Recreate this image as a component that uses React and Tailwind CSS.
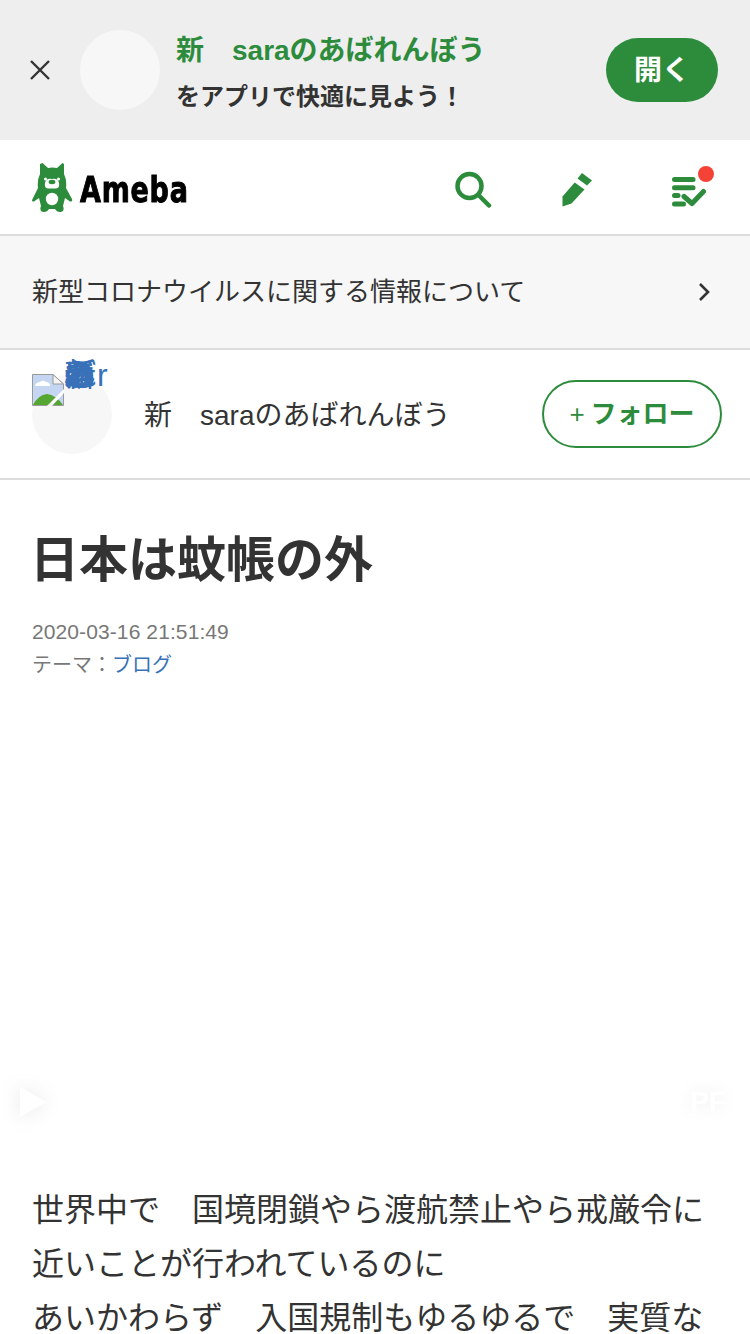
import React from 'react';

const GREEN = '#2d8c3c';
const stackedName = ['新', 'の', 'あ', 'ば', 'れ', 'ん', 'ぼ', 'う', 's', 'a'];

const AmebaMark = () => (
    <svg width="41" height="51" viewBox="0 0 41 51" fill={GREEN} className="shrink-0">
        <path d="M10.5 1 L16 6 Q20 5 25 6 L30.5 1 L32 2 L32 12 Q35 18 34 26 L40 37 Q41 40 38 39.5 L33 36 L31 44 Q33 49 29 50 Q25 50.5 23 47 L17 47 Q15 50.5 11 50 Q7 49 9 44 L7 36 L2 39.5 Q-1 40 0.5 37 L6 26 Q5 18 8 12 L8 2 Z" />
        <circle cx="20" cy="37" r="6.2" fill="#fff" />
        <path d="M13 21 Q14 16 20 17 Q26 16 27 21 Q28 26 24 26.5 L16 26.5 Q12 26 13 21 Z" fill="#fff" />
        <circle cx="13.5" cy="17" r="1.5" fill="#fff" />
        <circle cx="26.5" cy="17" r="1.5" fill="#fff" />
        <ellipse cx="20" cy="20" rx="3.4" ry="2.2" />
    </svg>
);

const SearchIcon = () => (
    <svg width="38" height="38" viewBox="0 0 38 38" fill="none" stroke={GREEN} strokeWidth="4.5" strokeLinecap="round">
        <circle cx="15.5" cy="15" r="12" />
        <path d="M24.5 24 L35 34.5" />
    </svg>
);

const PencilIcon = () => (
    <svg width="32" height="34" viewBox="0 0 32 34" fill={GREEN}>
        <path d="M20 0 L30 7.5 L25 12.5 L15.5 5.5 Z" />
        <path d="M12.7 9.5 L22.5 16.5 L9.5 30.5 L0.5 33.5 L0.5 23.5 Z" />
    </svg>
);

const TasksIcon = () => (
    <svg width="34" height="30" viewBox="0 0 34 30" fill="none" stroke={GREEN} strokeWidth="5" strokeLinecap="round" strokeLinejoin="round">
        <path d="M2.5 2.5 H21" />
        <path d="M2.5 10.8 H21" />
        <path d="M2.5 18.5 H6" />
        <path d="M2.5 27 H11.5" />
        <path d="M12 19.5 L20 26.5 L31.5 14.5" />
    </svg>
);

// stock placeholder the browser paints for an image that failed to load
const BrokenImage = () => (
    <svg width="32" height="32" viewBox="0 0 32 32" className="absolute left-0 top-0">
        <path d="M0.5 0.5 H21 L31.5 10 V31.5 H0.5 Z" fill="#c5d6f3" stroke="#9a9a9a" />
        <path d="M21 0.5 V10 H31.5 Z" fill="#f4f4f4" stroke="#9a9a9a" />
        <path d="M3 12 Q4 8 8 8 Q11 5 14 8 Q18 8 18 12 Z" fill="#fff" />
        <path d="M1 31 Q6 21 15 20 Q24 21 31 31 Z" fill="#55a632" />
        <path d="M14 33 L33 14 L33 18 L19 33 Z" fill="#fff" />
    </svg>
);

export default function App() {
    return (
        <div className="relative h-[1334px] overflow-hidden bg-white text-[#333] font-['Liberation_Sans','Noto_Sans_CJK_JP',sans-serif]">
            {/* app banner */}
            <div className="flex h-[140px] items-center bg-[#eeeeee]">
                <svg width="20" height="20" viewBox="0 0 20 20" className="ml-[30px] shrink-0" stroke="#333" strokeWidth="2.4">
                    <path d="M1 1 L19 19 M19 1 L1 19" />
                </svg>
                <div className="ml-[30px] size-20 shrink-0 rounded-full bg-[#f7f7f7]" />
                <div className="ml-4 flex-1 pt-1.5">
                    <div className="text-[28px] leading-[40px] font-bold text-[#2d8c3c]">新　saraのあばれんぼう</div>
                    <div className="mt-[7px] text-[24px] leading-[38px] font-bold">をアプリで快適に見よう！</div>
                </div>
                <button className="mr-8 h-16 w-28 rounded-full bg-[#2d8c3c] pt-0.5 text-[28px] font-bold text-white">開く</button>
            </div>

            {/* global header */}
            <header className="flex h-[96px] items-center border-b-2 border-[#dddddd] pl-8">
                <AmebaMark />
                <span className="ml-[7px] mt-1.5 origin-left scale-x-[0.75] text-[36px] leading-none font-bold tracking-[1px] text-black font-['DejaVu_Sans',sans-serif] [-webkit-text-stroke:1px_black]">Ameba</span>
                <div className="ml-auto flex items-center pt-1.5">
                    <SearchIcon />
                    <div className="ml-[70px]"><PencilIcon /></div>
                    <div className="relative mr-[44px] ml-[78px] mt-1">
                        <TasksIcon />
                        <span className="absolute -top-[11px] right-[-8px] size-4 rounded-full bg-[#f44336]" />
                    </div>
                </div>
            </header>

            {/* notice link */}
            <div className="flex h-[114px] items-center justify-between border-b-2 border-[#dddddd] bg-[#f7f7f7] pr-10 pl-8">
                <span className="text-[26px]">新型コロナウイルスに関する情報について</span>
                <svg width="12" height="20" viewBox="0 0 12 20" fill="none" stroke="#333" strokeWidth="2.6">
                    <path d="M2 2 L10 10 L2 18" />
                </svg>
            </div>

            {/* blog owner row */}
            <div className="flex h-[130px] items-center border-b-2 border-[#dddddd] pr-7 pl-8">
                <div className="relative size-20 shrink-0 rounded-full bg-[#f7f7f7]">
                    <BrokenImage />
                    {/* alt text of the failed avatar, collapsed on itself */}
                    <div className="absolute -top-[22px] left-[32px] grid text-[32px] leading-[46px] text-[#3871b8]">
                        {stackedName.map((ch) => (
                            <span key={ch} className="col-start-1 row-start-1">{ch}</span>
                        ))}
                        <span className="col-start-2 row-start-1 ml-px">r</span>
                    </div>
                </div>
                <span className="ml-8 pt-1 text-[28px]">新　saraのあばれんぼう</span>
                <button className="ml-auto flex h-[68px] w-[180px] items-center justify-center rounded-full border-2 border-[#2d8c3c] text-[26px] font-bold text-[#2d8c3c]">
                    <span className="mr-1.5 font-normal">+</span>フォロー
                </button>
            </div>

            {/* entry */}
            <main className="px-8">
                <h1 className="mt-[46px] -ml-0.5 text-[49px] leading-[68px] font-bold">日本は蚊帳の外</h1>
                <div className="mt-[22px] text-[21px] leading-[32px] tracking-[0.1px] text-[#777]">2020-03-16 21:51:49</div>
                <div className="pt-px text-[20px] leading-[32px] text-[#777]">
                    テーマ：<span className="text-[#3871b8]">ブログ</span>
                </div>
                <div className="mt-[502px] text-[32px] leading-[54px]">
                    <p>世界中で　国境閉鎖やら渡航禁止やら戒厳令に</p>
                    <p>近いことが行われているのに</p>
                    <p>あいかわらず　入国規制もゆるゆるで　実質な</p>
                </div>
            </main>

            {/* faint floating controls over the entry */}
            <svg width="26" height="30" viewBox="0 0 26 30" className="absolute left-[20px] top-[1087px] drop-shadow-[0_0_10px_rgba(0,0,0,0.1)]">
                <path d="M0 0 L26 15 L0 30 Z" fill="#fff" />
            </svg>
            <span className="absolute right-[24px] top-[1088px] text-[28px] leading-none font-bold text-white drop-shadow-[0_0_8px_rgba(0,0,0,0.07)]">PF</span>
        </div>
    );
}
